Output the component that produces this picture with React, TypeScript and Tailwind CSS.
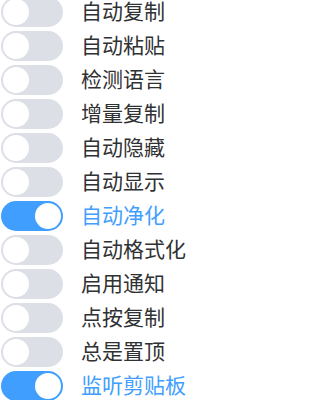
import { useState } from "react";

type Option = {
	label: string;
	on: boolean;
};

const initialOptions: Option[] = [
	{ label: "自动复制", on: false },
	{ label: "自动粘贴", on: false },
	{ label: "检测语言", on: false },
	{ label: "增量复制", on: false },
	{ label: "自动隐藏", on: false },
	{ label: "自动显示", on: false },
	{ label: "自动净化", on: true },
	{ label: "自动格式化", on: false },
	{ label: "启用通知", on: false },
	{ label: "点按复制", on: false },
	{ label: "总是置顶", on: false },
	{ label: "监听剪贴板", on: true },
];

function Switch({ on, onToggle }: { on: boolean; onToggle: () => void }) {
	return (
		<button
			type="button"
			onClick={onToggle}
			className={`flex h-[30px] w-[62px] shrink-0 items-center rounded-full px-[2px] ${
				on ? "justify-end bg-[#409eff]" : "justify-start bg-[#dcdfe6]"
			}`}
		>
			<span className="h-[26px] w-[26px] rounded-full bg-white" />
		</button>
	);
}

export default function App() {
	const [options, setOptions] = useState(initialOptions);

	const toggle = (index: number) => {
		setOptions((prev) =>
			prev.map((opt, i) => (i === index ? { ...opt, on: !opt.on } : opt))
		);
	};

	return (
		<div className="h-[400px] overflow-hidden bg-white">
			<div
				className="-mt-[5px] flex flex-col"
				style={{ fontFamily: '"Noto Sans CJK SC", "Noto Sans", sans-serif' }}
			>
				{options.map((opt, i) => (
					<div key={opt.label} className="flex h-[34px] shrink-0 items-center gap-[18px] pl-[1px]">
						<Switch on={opt.on} onToggle={() => toggle(i)} />
						<span
							className={`pb-[4px] text-[21px] leading-none ${
								opt.on ? "text-[#409eff]" : "text-[#303133]"
							}`}
						>
							{opt.label}
						</span>
					</div>
				))}
			</div>
		</div>
	);
}
